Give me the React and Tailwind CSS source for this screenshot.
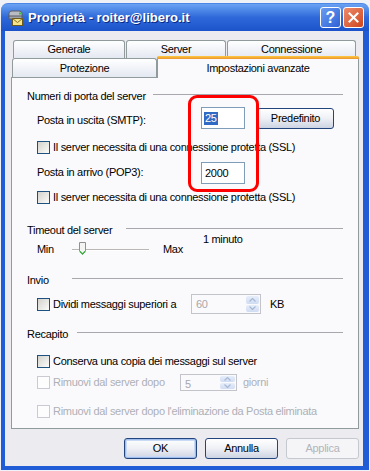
import React from "react";

function Checkbox({ disabled }) {
  return (
    <div
      className={
        disabled
          ? "w-[13px] h-[13px] shrink-0 border border-[#cacbd2] bg-[#fdfdfd]"
          : "w-[13px] h-[13px] shrink-0 border border-[#1c5180] bg-linear-to-br from-[#d3d2cc] to-[#fbfbfa]"
      }
    />
  );
}

function GroupHeader({ label, labelW }) {
  return (
    <div className="flex items-center h-[14px] pl-[15px] pr-[15px]">
      <span className={`${labelW} shrink-0 leading-[14px]`}>{label}</span>
      <div className="flex-1 h-px bg-[#a8a8ac] -mt-[3px]" />
    </div>
  );
}

function XPButton({ children, def, disabled, w = "w-[73px]" }) {
  if (disabled) {
    return (
      <div
        className={`${w} h-[21px] rounded-[3px] border border-[#c6c8d0] bg-[#f5f5f7] flex items-center justify-center text-[#b2b4bb]`}
      >
        {children}
      </div>
    );
  }
  return (
    <div
      className={`${w} h-[21px] rounded-[3px] border border-[#23457d] bg-linear-to-b from-[#ffffff] via-[#eef0f5] to-[#cdd4e2] flex items-center justify-center text-black ${
        def ? "shadow-[inset_0_0_0_1px_#9fbcea,inset_0_0_0_2px_#c9daf5]" : ""
      }`}
    >
      {children}
    </div>
  );
}

function Spin({ value, w, arrowW = "w-[15px]" }) {
  return (
    <div className={`${w} h-full border border-[#c3c4c9] bg-[#fafafc] flex items-stretch`}>
      <span className="flex-1 pl-[4px] leading-[18px] text-[#a6a7ab]">{value}</span>
      <div className={`${arrowW} flex flex-col gap-px p-px`}>
        <div className="flex-1 rounded-[2px] bg-linear-to-b from-[#e7eefa] to-[#cfdcf2] flex items-center justify-center">
          <svg width="7" height="4" viewBox="0 0 7 4">
            <path d="M0.5 3.5 L3.5 0.5 L6.5 3.5" fill="none" stroke="#a9b8d4" strokeWidth="1.2" />
          </svg>
        </div>
        <div className="flex-1 rounded-[2px] bg-linear-to-b from-[#e7eefa] to-[#cfdcf2] flex items-center justify-center">
          <svg width="7" height="4" viewBox="0 0 7 4">
            <path d="M0.5 0.5 L3.5 3.5 L6.5 0.5" fill="none" stroke="#a9b8d4" strokeWidth="1.2" />
          </svg>
        </div>
      </div>
    </div>
  );
}

function AppIcon() {
  return (
    <svg width="17" height="17" viewBox="0 0 17 17">
      <path d="M2 4 Q2 2 5 2 L12 2 Q15 2 15 4 L15 8 L2 8 Z" fill="#b9bcc2" stroke="#5c5f66" strokeWidth="1" />
      <rect x="2" y="7" width="13" height="3" fill="#9ea2a9" stroke="#5c5f66" strokeWidth="1" />
      <rect x="12" y="3.5" width="2" height="2" fill="#37c13b" />
      <rect x="5.5" y="9.5" width="10" height="7" fill="#f6e38a" stroke="#6b5a1e" strokeWidth="1" />
      <path d="M5.5 9.5 L10.5 13.5 L15.5 9.5" fill="none" stroke="#8a7420" strokeWidth="1" />
    </svg>
  );
}

export default function App() {
  return (
    <div className="w-[370px] h-[471px] bg-[#eef1f6] overflow-hidden relative font-['Liberation_Sans',Arial,sans-serif] text-[11px] tracking-[-0.3px] text-black">
      {/* window */}
      <div className="ml-[1px] mt-[3px] w-[368px] h-[467px] flex flex-col">
        {/* title bar */}
        <div className="h-[28px] shrink-0 rounded-t-[7px] bg-linear-to-b from-[#6aa2f2] via-[#2e68d9] to-[#1c53cb] flex items-center pl-[6px] pr-[5px] border-t border-[#4c86e6]">
          <AppIcon />
          <span className="ml-[4px] text-white font-bold text-[13px] tracking-normal [text-shadow:1px_1px_0_#0b2a86]">
            Proprietà - roiter@libero.it
          </span>
          <div className="flex-1" />
          <div className="w-[21px] h-[21px] rounded-[3px] border border-white bg-linear-to-br from-[#6b9cf2] to-[#2f62d6] flex items-center justify-center text-white font-bold text-[16px] tracking-normal leading-none">
            ?
          </div>
          <div className="ml-[2px] w-[21px] h-[21px] rounded-[3px] border border-white bg-linear-to-br from-[#ec8b6a] to-[#cf4318] flex items-center justify-center">
            <svg width="11" height="11" viewBox="0 0 11 11">
              <path d="M1.5 1.5 L9.5 9.5 M9.5 1.5 L1.5 9.5" stroke="white" strokeWidth="2" strokeLinecap="square" />
            </svg>
          </div>
        </div>
        {/* body */}
        <div className="flex-1 border-l-4 border-r-[6px] border-b-4 border-[#1f5cd6] bg-[#ecebf0] flex flex-col pt-[9px]">
          {/* tab row 1 */}
          <div className="flex ml-[8px] gap-px h-[18px]">
            <div className="w-[112px] h-[18px] rounded-t-[3px] border border-b-0 border-[#919b9c] bg-linear-to-b from-[#ffffff] to-[#e4e8f1] flex items-center justify-center">
              Generale
            </div>
            <div className="w-[100px] h-[18px] rounded-t-[3px] border border-b-0 border-[#919b9c] bg-linear-to-b from-[#ffffff] to-[#e4e8f1] flex items-center justify-center">
              Server
            </div>
            <div className="w-[129px] h-[18px] rounded-t-[3px] border border-b-0 border-[#919b9c] bg-linear-to-b from-[#ffffff] to-[#e4e8f1] flex items-center justify-center">
              Connessione
            </div>
          </div>
          {/* tab row 2 */}
          <div className="flex items-end ml-[7px] h-[19px] relative z-10">
            <div className="w-[145px] h-[19px] rounded-t-[3px] border border-b-0 border-[#919b9c] bg-linear-to-b from-[#ffffff] to-[#e4e8f1] flex items-center justify-center">
              Protezione
            </div>
            <div className="w-[202px] h-[22px] -mb-px rounded-t-[3px] border-x border-[#919b9c] bg-[#fafafc] flex flex-col">
              <div className="h-[3px] rounded-t-[2px] bg-linear-to-b from-[#ffc941] to-[#e8942d] -mx-px" />
              <div className="flex-1 flex justify-center pt-[1px]">Impostazioni avanzate</div>
            </div>
          </div>
          {/* pane */}
          <div className="ml-[6px] w-[348px] h-[352px] border border-[#919b9c] bg-[#fafafc] flex flex-col relative">
            <div className="mt-[11px]">
              <GroupHeader label="Numeri di porta del server" labelW="w-[126px]" />
            </div>
            {/* SMTP */}
            <div className="mt-[4px] h-[22px] flex items-center pl-[25px]">
              <span className="w-[164px] shrink-0 mt-[4px]">Posta in uscita (SMTP):</span>
              <div className="w-[44px] h-[22px] border border-[#7f9db9] bg-white flex items-center pl-[2px]">
                <span className="bg-[#316ac5] text-white leading-[13px] px-px">25</span>
              </div>
              <div className="ml-[12px]">
                <XPButton w="w-[77px]">Predefinito</XPButton>
              </div>
            </div>
            {/* cb1 */}
            <div className="mt-[12px] h-[13px] flex items-center pl-[25px] gap-[3px]">
              <Checkbox />
              <span>Il server necessita di una connessione protetta (SSL)</span>
            </div>
            {/* POP3 */}
            <div className="mt-[8px] h-[22px] flex items-center pl-[25px]">
              <span className="w-[164px] shrink-0 -mt-[1px]">Posta in arrivo (POP3):</span>
              <div className="w-[44px] h-[22px] border border-[#7f9db9] bg-white flex items-center pl-[3px]">
                <span>2000</span>
              </div>
            </div>
            {/* cb2 */}
            <div className="mt-[7px] h-[13px] flex items-center pl-[25px] gap-[3px]">
              <Checkbox />
              <span>Il server necessita di una connessione protetta (SSL)</span>
            </div>
            {/* Timeout */}
            <div className="mt-[19px]">
              <GroupHeader label="Timeout del server" labelW="w-[99px]" />
            </div>
            <div className="-mt-[4px] h-[23px] flex pl-[25px]">
              <div className="self-end h-[13px] flex items-center">
                <span className="w-[35px] shrink-0">Min</span>
                <div className="w-[77px] h-[13px] relative flex items-center">
                  <div className="w-full h-[2px] border-t border-[#b9b8b4] bg-white" />
                  <svg className="absolute left-[7px] -top-[1px]" width="7" height="13" viewBox="0 0 7 13">
                    <path d="M0.5 0.5 H6.5 V9 L3.5 12.5 L0.5 9 Z" fill="#f4f4f2" stroke="#8e9190" strokeWidth="1" />
                    <path d="M1 9.5 L3.5 12 L6 9.5" fill="none" stroke="#35b23a" strokeWidth="1.2" />
                  </svg>
                </div>
                <span className="ml-[14px]">Max</span>
              </div>
              <span className="self-start ml-[20px] leading-[12px]">1 minuto</span>
            </div>
            {/* Invio */}
            <div className="mt-[17px]">
              <GroupHeader label="Invio" labelW="w-[45px]" />
            </div>
            <div className="mt-[7px] h-[20px] flex items-center pl-[25px]">
              <Checkbox />
              <span className="ml-[3px] w-[138px] shrink-0">Dividi messaggi superiori a</span>
              <Spin value="60" w="w-[70px]" />
              <span className="ml-[9px]">KB</span>
            </div>
            {/* Recapito */}
            <div className="mt-[13px]">
              <GroupHeader label="Recapito" labelW="w-[50px]" />
            </div>
            <div className="mt-[14px] h-[13px] flex items-center pl-[25px] gap-[3px]">
              <Checkbox />
              <span>Conserva una copia dei messaggi sul server</span>
            </div>
            <div className="mt-[6px] h-[17px] flex items-center pl-[25px] text-[#aeb0b6]">
              <Checkbox disabled />
              <span className="ml-[3px] w-[127px] shrink-0">Rimuovi dal server dopo</span>
              <Spin value="5" w="w-[57px]" arrowW="w-[17px]" />
              <span className="ml-[6px]">giorni</span>
            </div>
            <div className="mt-[14px] h-[13px] flex items-center pl-[25px] gap-[3px] text-[#aeb0b6]">
              <Checkbox disabled />
              <span>Rimuovi dal server dopo l'eliminazione da Posta eliminata</span>
            </div>
            {/* red annotation */}
            <div className="absolute left-[176px] top-[17px] w-[71px] h-[97px] rounded-[9px] border-[3px] border-[#ff0000]" />
          </div>
          {/* buttons */}
          <div className="mt-[9px] flex justify-end gap-[8px] pr-[4px]">
            <XPButton def>OK</XPButton>
            <XPButton>Annulla</XPButton>
            <XPButton disabled>Applica</XPButton>
          </div>
        </div>
      </div>
    </div>
  );
}
